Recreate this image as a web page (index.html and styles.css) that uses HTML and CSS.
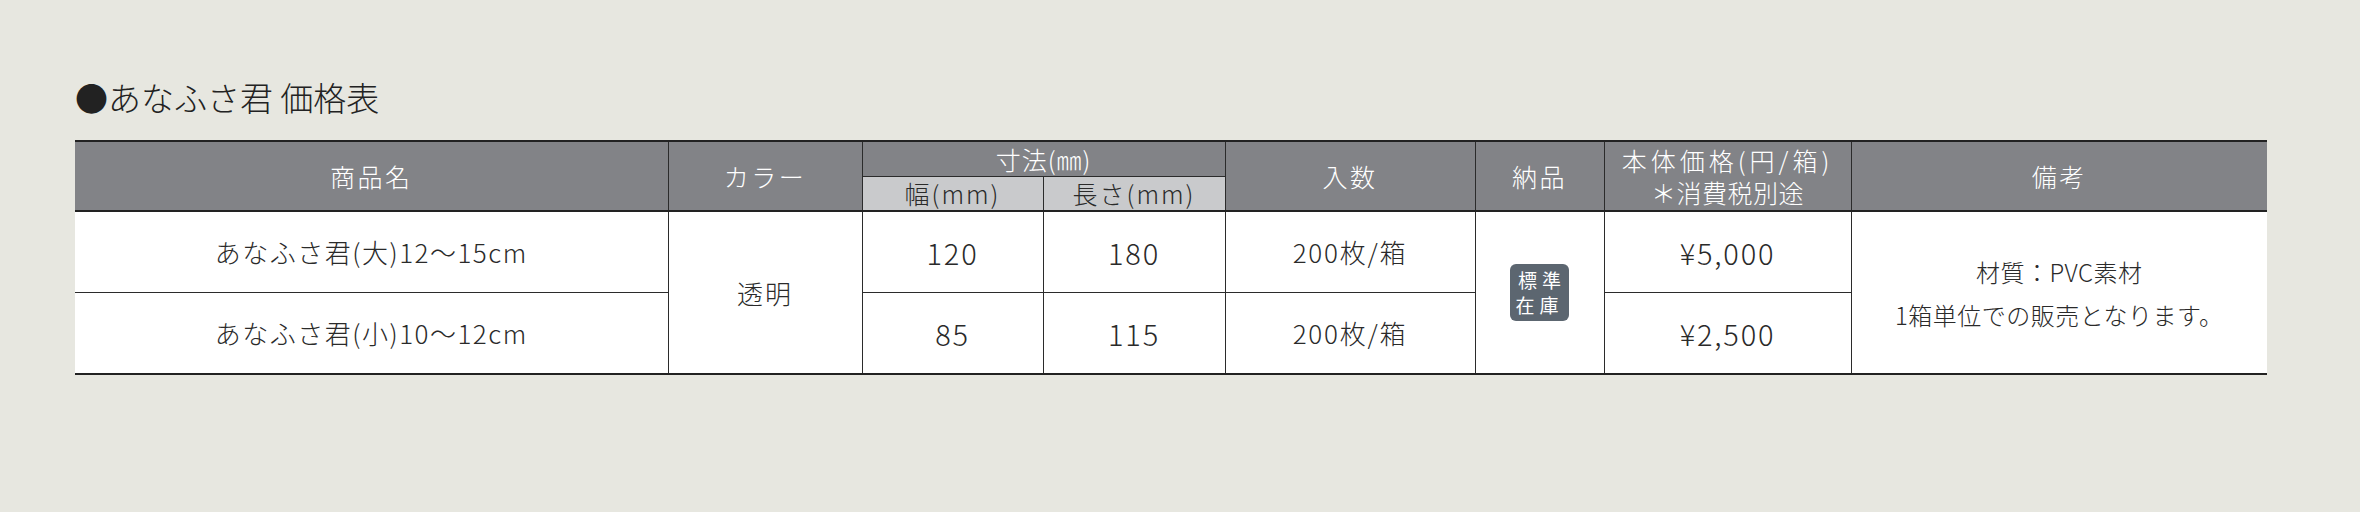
FILE: index.html
```html
<!DOCTYPE html>
<html lang="ja">
<head>
<meta charset="utf-8">
<title>あなふさ君 価格表</title>
<link rel="stylesheet" href="styles.css">
</head>
<body>
<div class="page">
  <h2 class="title">●あなふさ君 価格表</h2>
  <table class="price">
    <colgroup>
      <col class="c-name">
      <col class="c-color">
      <col class="c-w">
      <col class="c-l">
      <col class="c-qty">
      <col class="c-del">
      <col class="c-price">
      <col class="c-note">
    </colgroup>
    <thead>
      <tr class="hr1">
        <th rowspan="2">商品名</th>
        <th rowspan="2">カラー</th>
        <th colspan="2" class="dim">寸法(㎜)</th>
        <th rowspan="2">入数</th>
        <th rowspan="2">納品</th>
        <th rowspan="2" class="two"><span class="l1">本体価格(円/箱)</span><span class="l2">＊消費税別途</span></th>
        <th rowspan="2">備考</th>
      </tr>
      <tr class="hr2">
        <th class="sub">幅(mm)</th>
        <th class="sub">長さ(mm)</th>
      </tr>
    </thead>
    <tbody>
      <tr class="r1">
        <td class="name">あなふさ君(大)12～15cm</td>
        <td rowspan="2" class="color">透明</td>
        <td class="num">120</td>
        <td class="num">180</td>
        <td class="qty">200枚/箱</td>
        <td rowspan="2"><span class="badge">標準<br>在庫</span></td>
        <td class="num">¥5,000</td>
        <td rowspan="2" class="note">材質：PVC素材<br>1箱単位での販売となります。</td>
      </tr>
      <tr class="r2">
        <td class="name">あなふさ君(小)10～12cm</td>
        <td class="num">85</td>
        <td class="num">115</td>
        <td class="qty">200枚/箱</td>
        <td class="num">¥2,500</td>
      </tr>
    </tbody>
  </table>
</div>
</body>
</html>
```

FILE: styles.css
```css
html, body {
  margin: 0;
  padding: 0;
  background: #e7e7e0;
}

body {
  font-family: "Noto Sans CJK JP", "Noto Sans", sans-serif;
  color: #2a2a2a;
}

.page {
  padding: 78px 93px 0 75px;
}

.title {
  margin: 0 0 24px 0;
  font-size: 33px;
  line-height: 38px;
  font-weight: 300;
  color: #222;
}

.price {
  width: 2192px;
  table-layout: fixed;
  border-collapse: collapse;
  background: #fff;
}

.c-name { width: 593px; }
.c-color { width: 194px; }
.c-w { width: 181px; }
.c-l { width: 182px; }
.c-qty { width: 250px; }
.c-del { width: 129px; }
.c-price { width: 247px; }
.c-note { width: 416px; }

.price th,
.price td {
  border: 1px solid #2b2b2b;
  padding: 0;
  text-align: center;
  vertical-align: middle;
}

.price tr > :first-child { border-left: none; }
.price tr > :last-child { border-right: none; }
.price .hr2 > :first-child { border-left: 1px solid #2b2b2b; }
.price .hr2 > :last-child { border-right: 1px solid #2b2b2b; }

.price thead th {
  background: #828387;
  color: #fff;
  font-weight: 300;
  font-size: 25px;
  line-height: 28px;
  letter-spacing: 2.5px;
}

.price .hr1 th { border-top: 2px solid #222; }
.price .hr1 { height: 35px; }
.price .hr2 { height: 35px; }
.price .hr2 th,
.price .hr1 th[rowspan] { border-bottom: 2px solid #222; }

.price thead th.dim {
  letter-spacing: 1px;
}

.price thead th.two .l1,
.price thead th.two .l2 {
  display: block;
  line-height: 32px;
}

.price thead th.two .l1 { letter-spacing: 4px; }
.price thead th.two .l2 { letter-spacing: 0.5px; }

.price thead th.sub {
  background: #c9cacc;
  color: #2a2a2a;
  font-size: 25px;
  line-height: 28px;
  letter-spacing: 2px;
}

.price tbody td {
  font-size: 26px;
  font-weight: 300;
  color: #2a2a2a;
  line-height: 30px;
}

.price tbody td.name { letter-spacing: 1.5px; }
.price tbody td.color { letter-spacing: 2px; }
.price tbody td.num {
  font-size: 29px;
  letter-spacing: 1.8px;
}
.price tbody td.qty { letter-spacing: 1.8px; }

.price .r1 { height: 81px; }
.price .r2 { height: 82px; }
.price .r2 td { border-bottom: 2px solid #222; }
.price .r1 td[rowspan] { border-bottom: 2px solid #222; }

.price tbody td.note {
  font-size: 24px;
  line-height: 43px;
  letter-spacing: 0.5px;
}

.badge {
  display: inline-block;
  width: 59px;
  height: 57px;
  box-sizing: border-box;
  padding-top: 3px;
  border-radius: 6px;
  background: #5c6670;
  color: #fff;
  font-size: 19px;
  line-height: 25px;
  letter-spacing: 5px;
  text-indent: 5px;
  font-weight: 400;
  vertical-align: middle;
}
```
